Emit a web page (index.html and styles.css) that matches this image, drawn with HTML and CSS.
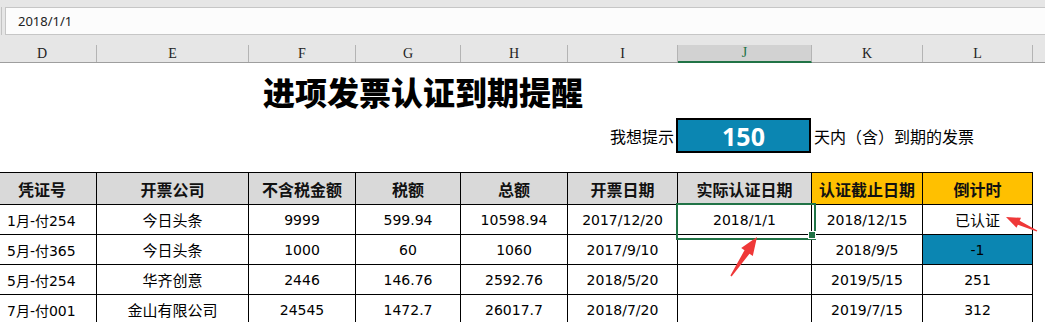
FILE: index.html
```html
<!DOCTYPE html>
<html lang="zh-CN">
<head>
<meta charset="utf-8">
<title>进项发票认证到期提醒</title>
<link rel="stylesheet" href="styles.css">
</head>
<body>
<div class="fbar">
  <div class="namebox"></div>
  <div class="finput">2018/1/1</div>
</div>
<div class="colhdr">
  <div class="ch">D</div>
  <div class="ch">E</div>
  <div class="ch">F</div>
  <div class="ch">G</div>
  <div class="ch">H</div>
  <div class="ch">I</div>
  <div class="ch sel">J</div>
  <div class="ch">K</div>
  <div class="ch">L</div>
  <div class="ch">M</div>
</div>
<div class="sheet">
  <div class="title-row"><h1 class="title">进项发票认证到期提醒</h1></div>
  <div class="grid prompt">
    <div class="p-label">我想提示</div>
    <div class="p-box">150</div>
    <div class="p-tail">天内（含）到期的发票</div>
  </div>
  <div class="grid table">
    <div class="c h">凭证号</div>
    <div class="c h">开票公司</div>
    <div class="c h">不含税金额</div>
    <div class="c h">税额</div>
    <div class="c h">总额</div>
    <div class="c h">开票日期</div>
    <div class="c h">实际认证日期</div>
    <div class="c h o">认证截止日期</div>
    <div class="c h o">倒计时</div>

    <div class="c d first">1月-付254</div>
    <div class="c d zh">今日头条</div>
    <div class="c d">9999</div>
    <div class="c d">599.94</div>
    <div class="c d">10598.94</div>
    <div class="c d">2017/12/20</div>
    <div class="c d selcell">2018/1/1</div>
    <div class="c d">2018/12/15</div>
    <div class="c d zh">已认证</div>

    <div class="c d first">5月-付365</div>
    <div class="c d zh">今日头条</div>
    <div class="c d">1000</div>
    <div class="c d">60</div>
    <div class="c d">1060</div>
    <div class="c d">2017/9/10</div>
    <div class="c d"></div>
    <div class="c d">2018/9/5</div>
    <div class="c d blue">-1</div>

    <div class="c d first">5月-付254</div>
    <div class="c d zh">华齐创意</div>
    <div class="c d">2446</div>
    <div class="c d">146.76</div>
    <div class="c d">2592.76</div>
    <div class="c d">2018/5/20</div>
    <div class="c d"></div>
    <div class="c d">2019/5/15</div>
    <div class="c d">251</div>

    <div class="c d first">7月-付001</div>
    <div class="c d zh">金山有限公司</div>
    <div class="c d">24545</div>
    <div class="c d">1472.7</div>
    <div class="c d">26017.7</div>
    <div class="c d">2018/7/20</div>
    <div class="c d"></div>
    <div class="c d">2019/7/15</div>
    <div class="c d">312</div>
  </div>
</div>
<svg class="arrows" width="1045" height="322" viewBox="0 0 1045 322" aria-hidden="true">
  <polygon points="757,237 752.8,255.9 749.5,253.7 731.6,276.4 730.4,275.6 744.5,250.3 741.2,248.1"/>
  <polygon points="1006,217 1016.5,227.8 1017.9,224.8 1036.75,231.55 1037.25,230.45 1019.7,220.8 1021,217.8"/>
</svg>
</body>
</html>
```

FILE: styles.css
```css
* { box-sizing: border-box; }
html, body {
  margin: 0;
  padding: 0;
}
body {
  width: 1045px;
  height: 322px;
  overflow: hidden;
  position: relative;
  background: #ffffff;
  font-family: "Noto Sans CJK SC", sans-serif;
  color: #000;
}

/* formula bar */
.fbar {
  height: 35px;
  padding-top: 7px;
  background: #e6e6e6;
  display: flex;
}
.namebox {
  width: 1px;
  height: 28px;
  margin-left: 1px;
  background: #c3c3c3;
}
.finput {
  flex: 1;
  height: 28px;
  margin-left: 3px;
  border: 1px solid #c6c6c6;
  border-right: none;
  background: #fcfcfc;
  padding-left: 12px;
  display: flex;
  align-items: center;
  font-family: "Noto Sans", "DejaVu Sans", sans-serif;
  font-size: 13px;
  color: #222;
}

/* column header */
.colhdr {
  background: #e6e6e6;
  padding-top: 10px;
  margin-left: -12px;
  width: 1090px;
  display: grid;
  grid-template-columns: 109px 152px 107px 105px 107px 110px 134px 111px 110px 40px;
  border-bottom: 1px solid #9e9e9e;
}
.ch {
  height: 17px;
  border-right: 1px solid #b4b4b4;
  display: flex;
  align-items: center;
  justify-content: center;
  font-family: "Liberation Serif", serif;
  font-size: 14px;
  color: #222;
}
.ch:first-child { padding-right: 0; }
.ch.sel {
  background: #d2d2d2;
  color: #217346;
  border-bottom: 2px solid #217346;
  margin-bottom: -1px;
  height: 18px;
}

/* sheet */
.sheet {
  margin-left: -12px;
  width: 1090px;
}
.title-row {
  height: 55px;
  display: flex;
  align-items: center;
  padding-left: 275px;
}
.title {
  margin: 0;
  font-size: 32px;
  font-weight: 900;
  line-height: 1;
  letter-spacing: 0;
  color: #000;
}
.grid {
  display: grid;
  grid-template-columns: 109px 152px 107px 105px 107px 110px 134px 111px 110px;
}
.prompt {
  height: 35px;
  margin-bottom: 19px;
  font-size: 16px;
}
.p-label {
  grid-column: 6;
  display: flex;
  align-items: center;
  justify-content: flex-end;
  padding-right: 4px;
}
.p-box {
  grid-column: 7;
  margin-left: -2px;
  width: 135px;
  height: 35px;
  border: 2px solid #000;
  background: #0b86b2;
  color: #fff;
  font-family: "Noto Sans", sans-serif;
  font-weight: 700;
  font-size: 25px;
  display: flex;
  align-items: center;
  justify-content: center;
}
.p-tail {
  grid-column: 8 / span 2;
  display: flex;
  align-items: center;
  padding-left: 2px;
  white-space: nowrap;
}

/* table */
.table {
  border-top: 1px solid #000;
  width: 1045px;
}
.c {
  border-right: 1px solid #000;
  border-bottom: 1px solid #000;
  display: flex;
  align-items: center;
  justify-content: center;
  white-space: nowrap;
}
.h {
  height: 32px;
  background: #d9d9d9;
  font-size: 16px;
  font-weight: 700;
  color: #111;
}
.h.o { background: #ffc000; }
.d {
  height: 30px;
  font-family: "DejaVu Sans", "Noto Sans CJK SC", sans-serif;
  font-size: 14px;
  color: #000;
}
.d.zh {
  font-family: "Noto Sans CJK SC", sans-serif;
  font-size: 15px;
}
.d.first {
  justify-content: flex-start;
  padding-left: 19px;
}
.d.blue { background: #0b86b2; }
.selcell { position: relative; }
.selcell::after {
  content: "";
  position: absolute;
  left: -2px;
  top: -2px;
  width: 136px;
  height: 33px;
  border: 2px solid #217346;
}
.selcell::before {
  content: "";
  position: absolute;
  left: 130px;
  top: 26px;
  width: 6px;
  height: 6px;
  background: #217346;
  border: 1px solid #fff;
  z-index: 2;
}

.arrows {
  position: absolute;
  left: 0;
  top: 0;
  pointer-events: none;
}
.arrows polygon { fill: #ef3838; }
```
